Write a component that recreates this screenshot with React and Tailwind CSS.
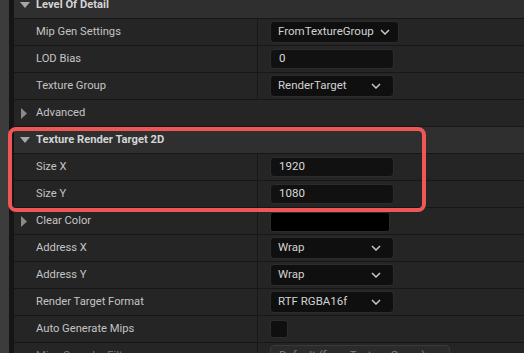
import React from "react";

const Chevron = ({ color = "#c8c8c8" }) => (
  <svg width="10" height="6" viewBox="0 0 10 6" className="shrink-0">
    <polyline points="1,1 5,5 9,1" fill="none" stroke={color} strokeWidth="1.5" />
  </svg>
);

const DownTri = () => (
  <svg width="10" height="6" viewBox="0 0 10 6" className="shrink-0">
    <polygon points="0,0 10,0 5,6" fill="#a8a8a8" />
  </svg>
);

const RightTri = () => (
  <svg width="6" height="11" viewBox="0 0 6 11" className="shrink-0">
    <polygon points="0,0 6,5.5 0,11" fill="#8a8a8a" />
  </svg>
);

const Header = ({ label, first }) => (
  <div className={`flex h-[27px] shrink-0 items-center border-b border-[#171717] bg-[#2f2f2f] pl-[6px] ${first ? "-mt-[8px]" : ""}`}>
    <DownTri />
    <span className="ml-[6px] whitespace-nowrap text-[11.2px] font-bold text-[#d4d4d4]">{label}</span>
  </div>
);

const Row = ({ label, children, dim }) => (
  <div className="flex h-[27px] shrink-0 border-b border-[#171717] bg-[#252525]">
    <div className="flex w-[244px] items-center border-r border-[#171717] pl-[22px]">
      <span className={`whitespace-nowrap text-[11.2px] ${dim ? "text-[#7c7c7c]" : "text-[#c4c4c4]"}`}>{label}</span>
    </div>
    <div className="flex flex-1 items-center pl-[12px]">{children}</div>
  </div>
);

const Combo = ({ text, w = "w-[124px]", tight }) => (
  <div className={`flex h-[22px] ${w} items-center rounded-[4px] border border-[#2c2c2c] bg-[#0f0f0f] pl-[7px] pr-[12px] ${tight ? "gap-[6px]" : "justify-between"}`}>
    <span className="whitespace-nowrap text-[11.5px] text-[#d2d2d2]">{text}</span>
    <Chevron />
  </div>
);

const Input = ({ text }) => (
  <div className="flex h-[20px] w-[124px] items-center rounded-[4px] border border-[#2c2c2c] bg-[#111111] pl-[8px]">
    <span className="text-[11.5px] text-[#dadada]">{text}</span>
  </div>
);

export default function App() {
  return (
    <div className="relative flex h-[353px] w-[524px] overflow-hidden bg-[#171717]" style={{ fontFamily: "Roboto, 'Noto Sans', sans-serif" }}>
      <div className="w-[9px] shrink-0 bg-[#3c3c3c]" />
      <div className="w-[5px] shrink-0 bg-[#151515]" />
      <div className="flex flex-1 flex-col">
        <Header label="Level Of Detail" first />
        <Row label="Mip Gen Settings"><Combo text="FromTextureGroup" w="w-[129px]" tight /></Row>
        <Row label="LOD Bias"><Input text="0" /></Row>
        <Row label="Texture Group"><Combo text="RenderTarget" /></Row>
        <div className="flex h-[27px] shrink-0 items-center border-b border-[#171717] bg-[#252525] pl-[7px]">
          <RightTri />
          <span className="ml-[9px] text-[11.2px] text-[#c4c4c4]">Advanced</span>
        </div>
        <Header label="Texture Render Target 2D" />
        <Row label="Size X"><Input text="1920" /></Row>
        <Row label="Size Y"><Input text="1080" /></Row>
        <div className="flex h-[27px] shrink-0 border-b border-[#171717] bg-[#252525]">
          <div className="flex w-[244px] items-center border-r border-[#171717] pl-[7px]">
            <RightTri />
            <span className="ml-[9px] text-[11.2px] text-[#c4c4c4]">Clear Color</span>
          </div>
          <div className="flex flex-1 items-start pl-[12px] pt-[4px]">
            <div className="h-[20px] w-[120px] rounded-[3px] border border-[#2c2c2c] bg-black" />
          </div>
        </div>
        <Row label="Address X"><Combo text="Wrap" /></Row>
        <Row label="Address Y"><Combo text="Wrap" /></Row>
        <Row label="Render Target Format"><Combo text="RTF RGBA16f" /></Row>
        <Row label="Auto Generate Mips">
          <div className="h-[18px] w-[18px] rounded-[3px] border border-[#2c2c2c] bg-[#0f0f0f]" />
        </Row>
        <div className="flex h-[27px] shrink-0 border-b border-[#171717] bg-[#252525]">
          <div className="flex w-[244px] items-center border-r border-[#171717] pl-[22px]">
            <span className="whitespace-nowrap text-[11.2px] text-[#7c7c7c]">Mips Sampler Filter</span>
          </div>
          <div className="flex flex-1 items-start pl-[12px] pt-[2px]">
            <div className="flex h-[22px] w-[180px] items-center justify-between rounded-[4px] border border-[#3a3a3a] bg-[#2b2b2b] pl-[8px] pr-[12px]">
              <span className="whitespace-nowrap text-[11.5px] text-[#7e7e7e]">Default (from Texture Group)</span>
              <Chevron color="#7e7e7e" />
            </div>
          </div>
        </div>
      </div>
      <div className="absolute left-[8px] top-[127px] h-[85px] w-[418px] rounded-[8px] border-[4px] border-[#ef5656]" />
    </div>
  );
}
